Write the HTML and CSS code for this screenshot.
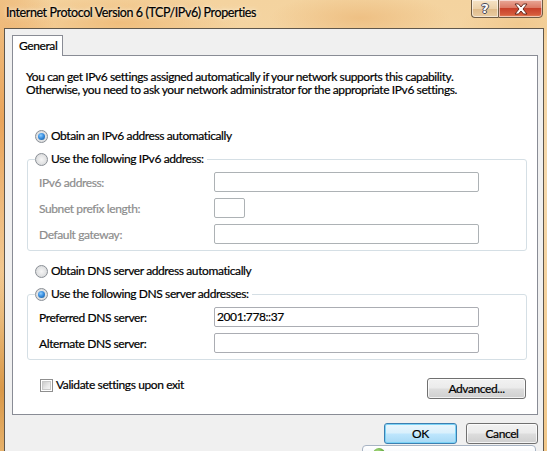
FILE: index.html
```html
<!DOCTYPE html>
<html>
<head>
<meta charset="utf-8">
<link rel="stylesheet" href="styles.css">
</head>
<body>
<div class="window">
  <div class="titlebar">
    <span class="title">Internet Protocol Version 6 (TCP/IPv6) Properties</span>
    <div class="caption-btns">
      <div class="cbtn help"><span>?</span></div>
      <div class="cbtn close">
        <svg width="16" height="12" viewBox="0 0 16 12"><path d="M2 1 L5.5 1 L8 4 L10.5 1 L14 1 L10 6 L14 11 L10.5 11 L8 8 L5.5 11 L2 11 L6 6 Z" fill="#fff" stroke="#5a1f14" stroke-width="0.9" stroke-linejoin="round"/></svg>
      </div>
    </div>
  </div>
  <div class="client">
    <div class="tabs"><div class="tab">General</div></div>
    <div class="panel">
      <p class="intro"><span class="line">You can get IPv6 settings assigned automatically if your network supports this capability.</span><span class="line">Otherwise, you need to ask your network administrator for the appropriate IPv6 settings.</span></p>
      <div class="radio-row first"><span class="radio checked"></span><span>Obtain an IPv6 address automatically</span></div>
      <fieldset class="group">
        <legend class="radio-row"><span class="radio"></span><span>Use the following IPv6 address:</span></legend>
        <div class="field disabled"><span class="lbl">IPv6 address:</span><span class="input wide"></span></div>
        <div class="field disabled"><span class="lbl">Subnet prefix length:</span><span class="input small"></span></div>
        <div class="field disabled"><span class="lbl">Default gateway:</span><span class="input wide"></span></div>
      </fieldset>
      <div class="radio-row second"><span class="radio"></span><span>Obtain DNS server address automatically</span></div>
      <fieldset class="group">
        <legend class="radio-row"><span class="radio checked"></span><span>Use the following DNS server addresses:</span></legend>
        <div class="field"><span class="lbl">Preferred DNS server:</span><span class="input wide">2001:778::37</span></div>
        <div class="field"><span class="lbl">Alternate DNS server:</span><span class="input wide"></span></div>
      </fieldset>
      <div class="bottom-row">
        <div class="check-row"><span class="checkbox"></span><span>Validate settings upon exit</span></div>
        <div class="btn adv">Advanced...</div>
      </div>
    </div>
    <div class="actions">
      <div class="btn ok">OK</div>
      <div class="btn cancel">Cancel</div>
    </div>
  </div>
  <div class="balloon"><span class="dot"></span></div>
</div>
</body>
</html>
```

FILE: styles.css
```css
* { box-sizing: border-box; }
html, body { margin: 0; padding: 0; }
body {
  width: 547px;
  height: 451px;
  overflow: hidden;
  font-family: Lato, "Noto Sans", sans-serif;
  font-size: 12px;
  letter-spacing: -0.4px;
  color: #000;
  -webkit-text-stroke: 0.2px currentColor;
}
.window {
  position: relative;
  height: 451px;
  padding: 0 3px 0 4px;
  display: flex;
  flex-direction: column;
  background:
    radial-gradient(ellipse 60px 200px at 2px 120px, #e9a45a 0, rgba(233,164,90,0) 100%),
    radial-gradient(ellipse 40px 120px at 2px 390px, #d99848 0, rgba(217,152,72,0) 100%),
    radial-gradient(ellipse 120px 30px at 120px 22px, #efbd7c 0, rgba(239,189,124,0) 100%),
    radial-gradient(ellipse 90px 25px at 360px 18px, #eec084 0, rgba(238,192,132,0) 100%),
    radial-gradient(ellipse 60px 20px at 520px 24px, #f1c98f 0, rgba(241,201,143,0) 100%),
    linear-gradient(180deg, #f4d39f 0, #f6d9ac 40%, #f2c88a 100%);
}
.titlebar {
  height: 28px;
  display: flex;
  justify-content: space-between;
  align-items: flex-start;
  padding-left: 2px;
}
.title {
  margin-top: 5px;
  line-height: 16px;
  font-size: 12.5px;
  color: #000;
  text-shadow: 0 0 6px rgba(255,245,225,0.9), 0 0 3px rgba(255,245,225,0.9);
}
.caption-btns {
  display: flex;
  margin-right: 1px;
  margin-top: -1px;
}
.cbtn {
  height: 19px;
  border: 1px solid #6f5c45;
  display: flex;
  align-items: center;
  justify-content: center;
  box-shadow: inset 0 0 0 1px rgba(255,255,255,0.55);
}
.help {
  width: 27px;
  border-radius: 0 0 0 4px;
  border-right: none;
  background: linear-gradient(180deg, #f6e3c6 0, #ecd1aa 50%, #dfbb8a 52%, #e9cca2 100%);
}
.help span {
  font-family: "DejaVu Sans", sans-serif;
  font-weight: bold;
  font-size: 13px;
  letter-spacing: 0;
  -webkit-text-stroke: 0;
  color: #fff;
  text-shadow: 0 0 1px #4a4a5a, 1px 0 0 #4a4a5a, -1px 0 0 #4a4a5a, 0 1px 0 #4a4a5a, 0 -1px 0 #4a4a5a;
  line-height: 14px;
}
.close {
  width: 45px;
  border-radius: 0 0 4px 0;
  background: linear-gradient(180deg, #e9a898 0, #dc7a66 45%, #c8402a 50%, #d55a3c 85%, #e88a5a 100%);
}
.client {
  flex: 1;
  border: 1px solid #5f574c;
  border-bottom: none;
  background: #f0f0f0;
  padding: 6px 5px 0 7px;
  display: flex;
  flex-direction: column;
}
.tabs { display: flex; }
.tab {
  width: 51px;
  height: 21px;
  margin-bottom: -1px;
  border: 1px solid #898c95;
  border-bottom: none;
  background: #fff;
  position: relative;
  z-index: 1;
  padding-left: 6px;
  line-height: 19px;
}
.panel {
  border: 1px solid #898c95;
  background: #fff;
  height: 360px;
  padding: 14px 0 0 13px;
}
.intro {
  margin: 0;
}
.intro .line {
  display: block;
  height: 13px;
  line-height: 13px;
  white-space: nowrap;
}
.radio-row {
  display: flex;
  align-items: center;
  height: 16px;
  line-height: 16px;
  white-space: nowrap;
}
.radio-row.first { margin-top: 32px; padding-left: 9px; }
.radio-row.second { margin-top: 12px; padding-left: 9px; }
.radio {
  width: 13px;
  height: 13px;
  border-radius: 50%;
  border: 1px solid #8a8f96;
  background: radial-gradient(circle at 50% 50%, #f6f6f6 0, #e2e3e4 55%, #cfd0d2 100%);
  margin-right: 3px;
  flex: none;
  display: flex;
  align-items: center;
  justify-content: center;
}
.radio.checked::after {
  content: "";
  width: 7px;
  height: 7px;
  border-radius: 50%;
  background: radial-gradient(circle at 40% 35%, #8fd0ff 0, #3a8ee0 45%, #14558f 100%);
}
.group {
  margin: 7px 10px 0 1px;
  padding: 0 0 6px 11px;
  border: 1px solid #d5dfe5;
  border-radius: 3px;
  min-width: 0;
}
.group legend {
  padding: 0 3px 0 0;
  margin-left: -4px;
}
.field {
  display: flex;
  align-items: center;
  height: 20px;
  margin-top: 6px;
}
.group legend + .field { margin-top: 5px; }
.lbl {
  width: 175px;
  flex: none;
}
.disabled .lbl { color: #8d8d8d; }
.input {
  height: 20px;
  border: 1px solid #abadb3;
  border-radius: 2px;
  background: #fff;
  padding-left: 2px;
  line-height: 18px;
}
.disabled .input { border-color: #adb2b5; }
.input.wide { width: 265px; }
.input.small { width: 31px; }
.bottom-row {
  display: flex;
  justify-content: space-between;
  align-items: flex-start;
  margin-top: 18px;
  padding-right: 11px;
}
.check-row {
  display: flex;
  align-items: center;
  margin-left: 14px;
  margin-top: -1px;
  height: 16px;
  line-height: 16px;
}
.checkbox {
  width: 13px;
  height: 13px;
  border: 1px solid #8f8f8f;
  background: #fff;
  margin-right: 3px;
  position: relative;
}
.checkbox::after {
  content: "";
  position: absolute;
  left: 1px; top: 1px; right: 1px; bottom: 1px;
  border: 1px solid #c9c9c9;
  background: linear-gradient(135deg, #cbcbcb 0, #e9e9e9 60%, #f4f4f4 100%);
}
.btn {
  height: 21px;
  border: 1px solid #707070;
  border-radius: 3px;
  background: linear-gradient(180deg, #f2f2f2 0, #ebebeb 48%, #dddddd 52%, #cfcfcf 100%);
  box-shadow: inset 0 0 0 1px rgba(255,255,255,0.75);
  display: flex;
  align-items: center;
  justify-content: center;
  line-height: 19px;
}
.adv { width: 99px; }
.actions {
  display: flex;
  justify-content: flex-end;
  gap: 9px;
  margin-top: 8px;
}
.ok {
  width: 73px;
  border-color: #3c7fb1;
  background: linear-gradient(180deg, #eaf6fd 0, #d9f0fc 48%, #bee6fd 52%, #a7d9f5 100%);
  box-shadow: inset 0 0 0 1px #7cd3f6;
}
.cancel { width: 72px; }
.balloon {
  position: absolute;
  left: 362px;
  top: 445px;
  width: 174px;
  height: 14px;
  border: 1px solid #a8b4c4;
  border-radius: 4px;
  background: linear-gradient(180deg, #ffffff, #eef2f7);
}
.balloon .dot {
  position: absolute;
  left: 10px;
  top: 2px;
  width: 12px;
  height: 12px;
  border-radius: 50%;
  background: radial-gradient(circle at 40% 35%, #b6e38a 0, #4a9a28 70%);
}
```
